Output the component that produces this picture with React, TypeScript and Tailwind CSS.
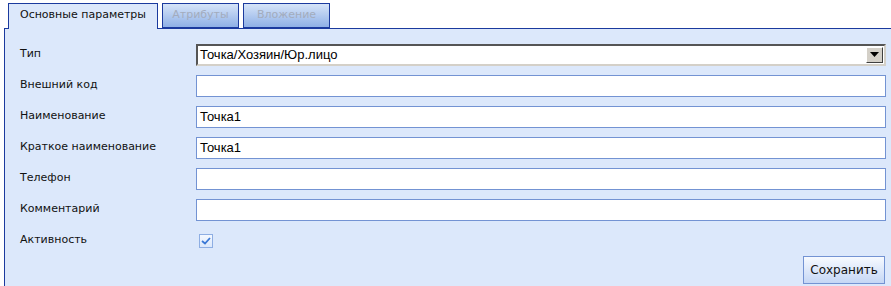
import React from 'react';

const rows = [
  { label: 'Внешний код', value: '' },
  { label: 'Наименование', value: 'Точка1' },
  { label: 'Краткое наименование', value: 'Точка1' },
  { label: 'Телефон', value: '' },
  { label: 'Комментарий', value: '' },
];

const labelCls = "w-[191px] shrink-0 pl-[15px] text-[11px] text-[#111] font-['DejaVu_Sans',sans-serif]";

export default function App() {
  return (
    <div className="h-[286px] w-[891px] overflow-hidden bg-white">
      {/* tabs */}
      <div className="relative z-10 flex gap-[4px] pl-[8px] pt-[3px]">
        <div className="flex h-[26px] w-[150px] items-center justify-center border-x border-t border-[#1b3a9e] bg-[#dce8fb] pb-[2px] text-[11px] text-[#111] font-['DejaVu_Sans',sans-serif]">
          Основные параметры
        </div>
        <div className="flex h-[25px] w-[77px] items-center justify-center border border-[#1b3a9e] bg-gradient-to-b from-[#d6e4f8] to-[#8fb0e6] text-[11px] text-[#a3acbd] font-['DejaVu_Sans',sans-serif]">
          Атрибуты
        </div>
        <div className="flex h-[25px] w-[87px] items-center justify-center border border-[#1b3a9e] bg-gradient-to-b from-[#d6e4f8] to-[#8fb0e6] text-[11px] text-[#a3acbd] font-['DejaVu_Sans',sans-serif]">
          Вложение
        </div>
      </div>

      {/* panel */}
      <div className="-mt-px ml-[4px] h-[300px] border-l border-t border-[#1b3a9e] bg-[#dce8fb] pt-[10px]">
        <div className="flex h-[31px] items-center">
          <div className={labelCls}>Тип</div>
          <div className="mr-[5px] flex h-[22px] flex-1 items-center border-2 border-t-[#555] border-l-[#555] border-b-[#d4d0c8] border-r-[#d4d0c8] bg-white">
            <span className="flex-1 pl-[2px] text-[13px] text-black font-['Liberation_Sans',sans-serif]">
              Точка/Хозяин/Юр.лицо
            </span>
            <span className="mr-[1px] flex h-[16px] w-[17px] items-center justify-center border border-t-white border-l-white border-b-[#404040] border-r-[#404040] bg-[#d4d0c8]">
              <svg width="9" height="5" viewBox="0 0 9 5">
                <polygon points="0,0 9,0 4.5,5" fill="#000" />
              </svg>
            </span>
          </div>
        </div>

        {rows.map((r) => (
          <div key={r.label} className="flex h-[31px] items-center">
            <div className={labelCls}>{r.label}</div>
            <div className="mr-[5px] flex h-[22px] flex-1 items-center border border-[#7393d3] bg-white pl-[3px] text-[13px] text-black font-['Liberation_Sans',sans-serif]">
              {r.value}
            </div>
          </div>
        ))}

        <div className="flex h-[31px] items-center">
          <div className={labelCls}>Активность</div>
          <div className="ml-[3px] flex h-[14px] w-[14px] items-center justify-center border border-[#8eaee3] bg-gradient-to-b from-[#f4f8ff] to-[#dce8fb]">
            <svg width="10" height="8" viewBox="0 0 10 8">
              <path d="M1 4 L4 6.5 L9 1" fill="none" stroke="#3a78d6" strokeWidth="1.8" />
            </svg>
          </div>
        </div>

        <div className="mr-[6px] flex justify-end">
          <button className="h-[28px] w-[82px] border border-[#7393d3] bg-gradient-to-b from-[#f7faff] to-[#c5d7f5] text-[12px] text-[#111] font-['DejaVu_Sans',sans-serif]">
            Сохранить
          </button>
        </div>
      </div>
    </div>
  );
}
